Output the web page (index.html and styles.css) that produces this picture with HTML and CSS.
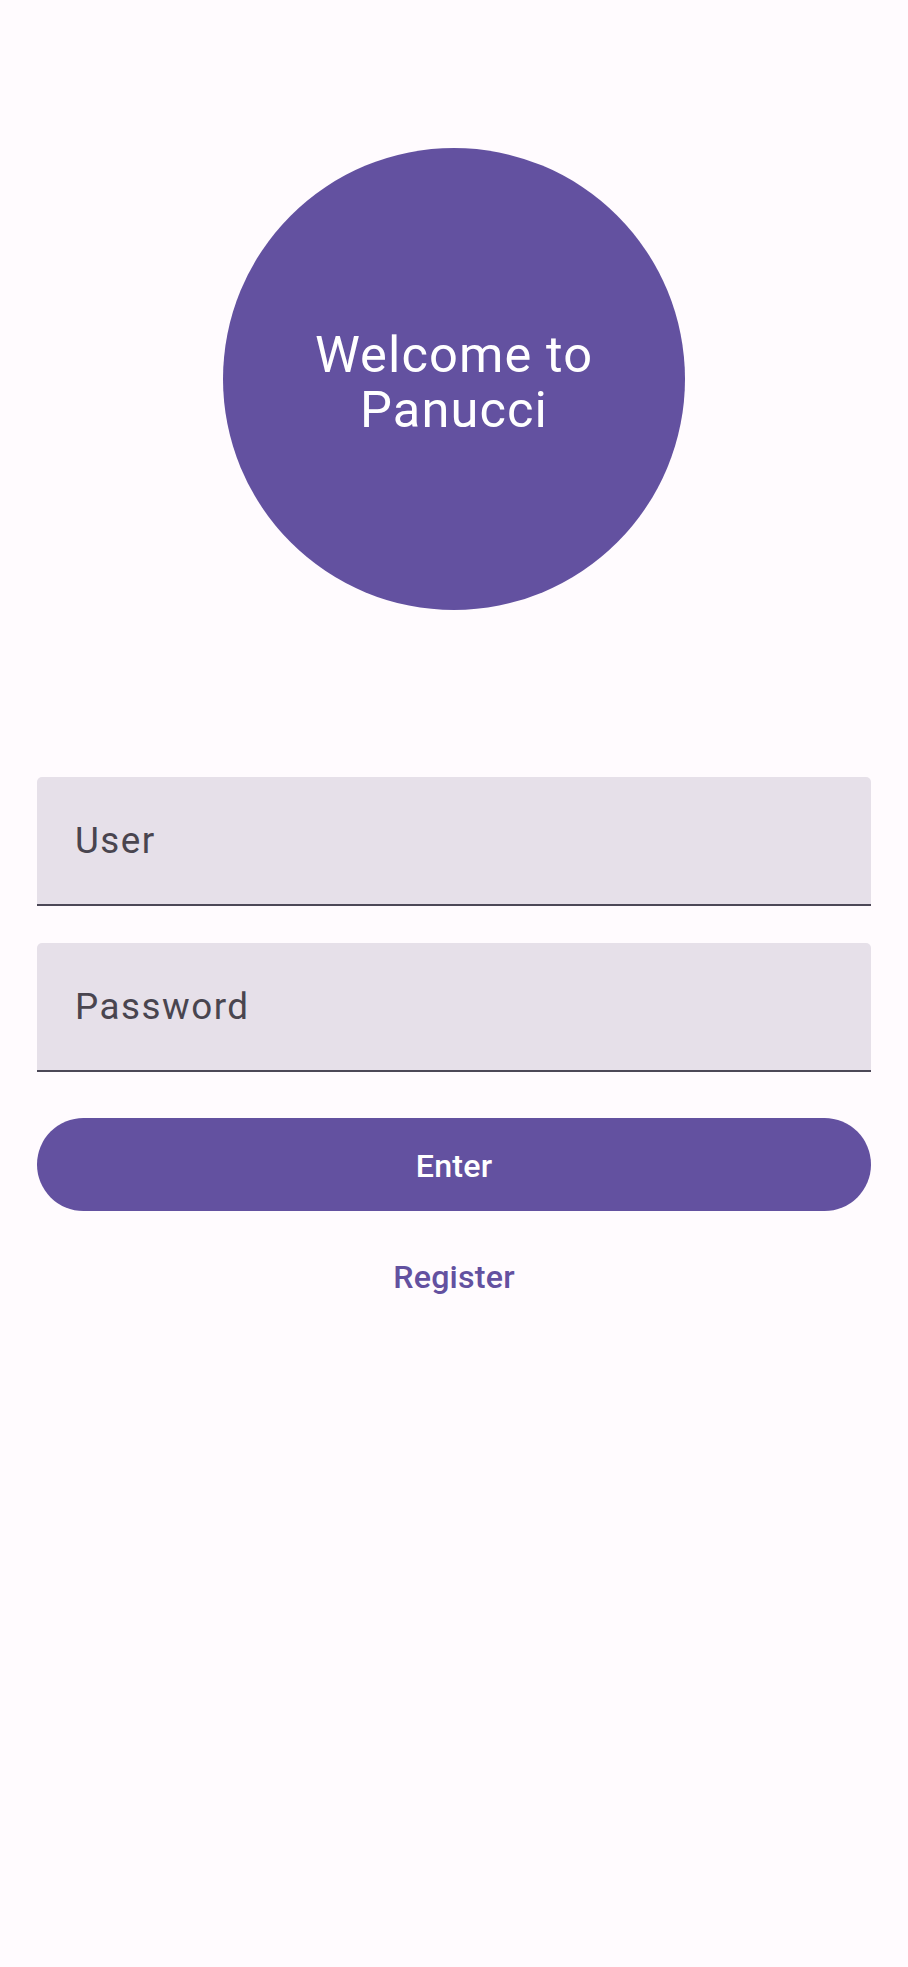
FILE: index.html
```html
<!DOCTYPE html>
<html lang="en">
<head>
    <meta charset="UTF-8">
    <meta name="viewport" content="width=device-width, initial-scale=1.0">
    <title>Panucci</title>
    <link rel="stylesheet" href="styles.css">
</head>
<body>
    <main class="screen">
        <div class="logo">
            <p>Welcome to<br>Panucci</p>
        </div>
        <form class="login-form" action="#" method="POST">
            <input class="field" type="text" name="user" placeholder="User">
            <input class="field" type="password" name="password" placeholder="Password">
            <button class="enter" type="submit">Enter</button>
            <a class="register" href="#">Register</a>
        </form>
    </main>
</body>
</html>
```

FILE: styles.css
```css
body {
  margin: 0;
  font-family: Roboto, "Liberation Sans", sans-serif;
  background-color: #fffbfe;
}
.screen { padding: 148px 37px 0; }
.logo {
  width: 462px;
  height: 462px;
  margin: 0 auto;
  border-radius: 50%;
  background-color: #6351a0;
  display: flex;
  align-items: center;
  justify-content: center;
}
.logo p {
  margin: 0;
  padding-top: 6px;
  color: #fff;
  font-size: 50.6px;
  line-height: 55px;
  letter-spacing: 1.1px;
  text-align: center;
}
.login-form { display: flex; flex-direction: column; margin-top: 167px; }
.field {
  box-sizing: border-box;
  height: 129px;
  margin: 0 0 37px;
  padding: 0 38px;
  border: none;
  border-bottom: 2.5px solid #4c4857;
  border-radius: 5px 5px 0 0;
  background-color: #e6e0e9;
  font-family: inherit;
  font-size: 36.8px;
  letter-spacing: 1.5px;
  color: #1c1b1f;
}
.field::placeholder { color: #49454f; }
.field:focus { outline: none; }
.login-form .field + .field { margin-bottom: 46px; }
.enter {
  height: 93px;
  border: none;
  border-radius: 47px;
  background-color: #6351a0;
  color: #fff;
  font-family: inherit;
  font-size: 32.2px;
  font-weight: 500;
  letter-spacing: 0.2px;
  padding-top: 3px;
  cursor: pointer;
}
.register {
  align-self: center;
  margin-top: 20px;
  height: 92px;
  line-height: 92px;
  padding: 0 28px;
  color: #6351a0;
  font-size: 32.2px;
  font-weight: 500;
  letter-spacing: 0.2px;
  text-decoration: none;
}
```
